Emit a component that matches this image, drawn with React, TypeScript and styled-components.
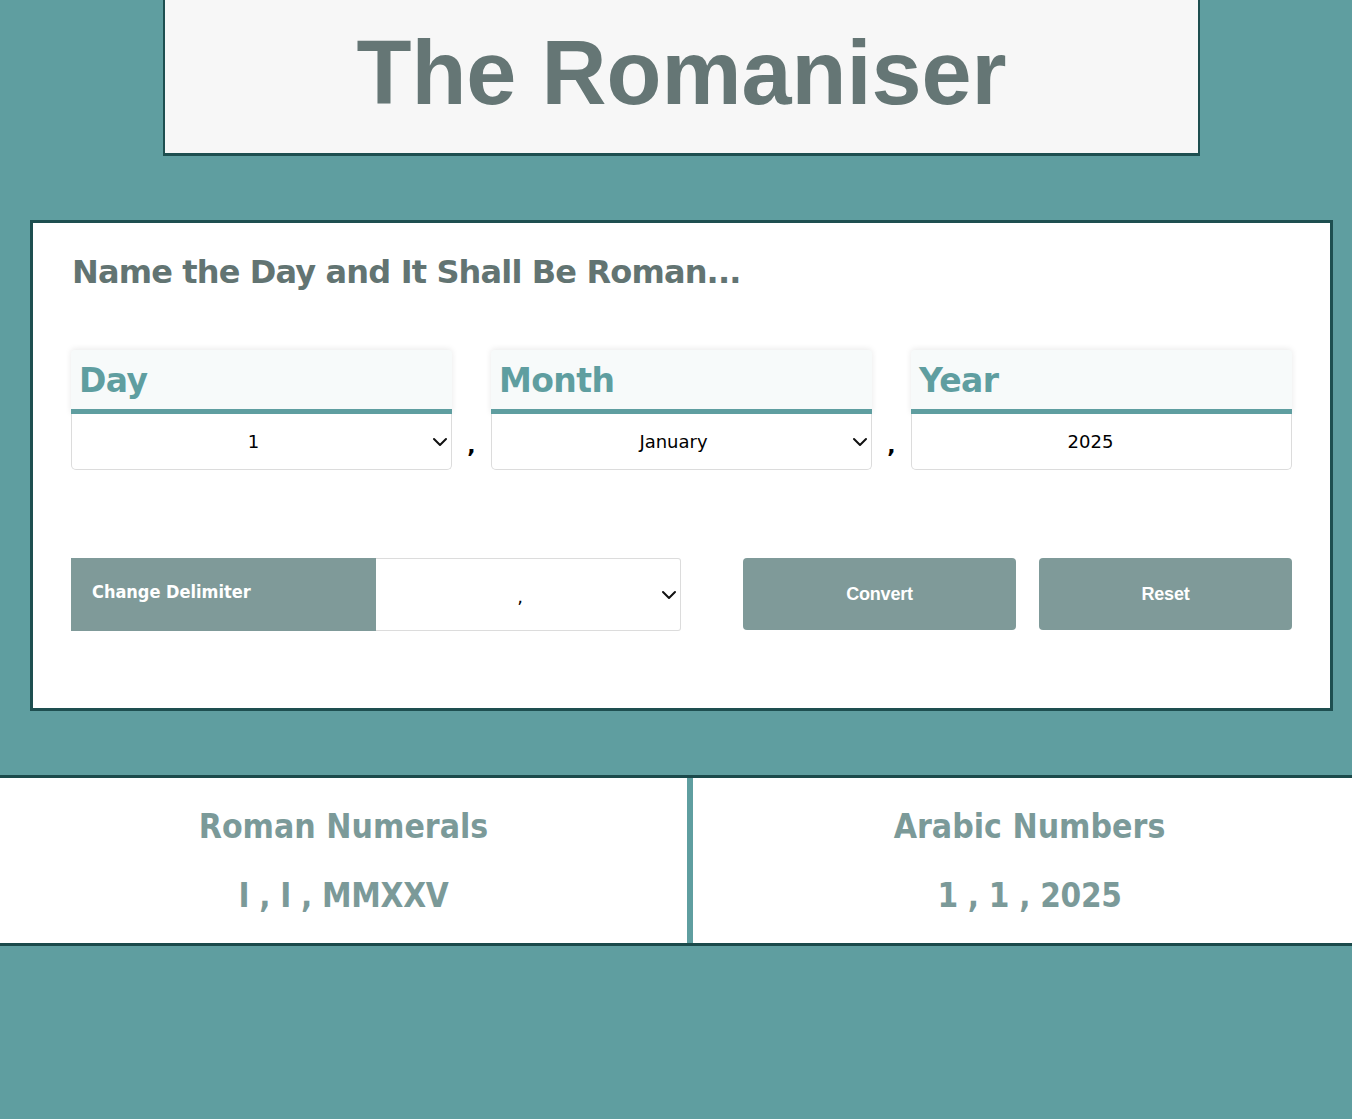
import React from "react";
import styled, { createGlobalStyle } from "styled-components";
import { ChevronDown } from "lucide-react";

const Global = createGlobalStyle`
  html, body { margin: 0; padding: 0; }
  body {
    background: #5f9ea0;
    font-family: "DejaVu Sans", sans-serif;
    min-height: 1119px;
  }
`;

const Page = styled.div`
  display: flex;
  flex-direction: column;
`;

const Header = styled.header`
  margin: 0 152px 0 163px;
  height: 153px;
  background: #f7f7f7;
  border: 2px solid #1e4f50;
  border-top: none;
  border-bottom-width: 3px;
  display: flex;
  align-items: center;
  justify-content: center;
`;

const Title = styled.h1`
  margin: 0;
  font-family: "Liberation Sans", Arial, sans-serif;
  font-weight: 700;
  font-size: 90px;
  letter-spacing: 0;
  color: #657675;
  line-height: 1;
  transform: translateY(-4px);
`;

const Card = styled.section`
  margin: 64px 19px 0 30px;
  background: #fff;
  border: 3px solid #1e4f50;
  padding: 30px 38px 77px 38px;
  display: flex;
  flex-direction: column;
`;

const Heading = styled.h2`
  margin: 0 0 59px 1px;
  font-family: "DejaVu Sans", sans-serif;
  font-weight: 700;
  font-size: 32px;
  letter-spacing: -0.85px;
  color: #627472;
  line-height: 1.2;
`;

const FieldRow = styled.div`
  display: flex;
  align-items: flex-end;
`;

const FieldCard = styled.div`
  width: 381px;
  display: flex;
  flex-direction: column;
`;

const FieldLabel = styled.div`
  height: 64px;
  box-sizing: border-box;
  background: #f7fafa;
  border-radius: 4px 4px 0 0;
  box-shadow: 0 -1px 6px rgba(0, 0, 0, 0.09);
  border-bottom: 5px solid #5f9ea0;
  padding: 2px 8px 0;
  display: flex;
  align-items: center;
  font-family: "DejaVu Sans", sans-serif;
  font-weight: 700;
  font-size: 33px;
  letter-spacing: -0.6px;
  color: #5f9ea0;
`;

const SelectWrap = styled.div<{ $h: number; $w?: number }>`
  position: relative;
  height: ${(p) => p.$h}px;
  width: ${(p) => (p.$w ? `${p.$w}px` : "100%")};
  flex: none;
  display: flex;
`;

const Chevron = styled(ChevronDown)`
  position: absolute;
  right: 0;
  top: 50%;
  margin-top: -12px;
  width: 24px;
  height: 24px;
  color: #111;
  pointer-events: none;
`;

const FieldSelect = styled.select`
  appearance: none;
  -webkit-appearance: none;
  height: 100%;
  width: 100%;
  box-sizing: border-box;
  border: 1px solid #dcdcdc;
  border-top: none;
  border-radius: 0 0 5px 5px;
  background: #fff;
  font-family: "DejaVu Sans", sans-serif;
  font-size: 18px;
  color: #000;
  text-align: center;
  text-align-last: center;
  padding: 0 24px 0 8px;
  outline: none;
`;

const FieldInput = styled.input`
  height: 56px;
  width: 100%;
  box-sizing: border-box;
  border: 1px solid #dcdcdc;
  border-top: none;
  border-radius: 0 0 5px 5px;
  background: #fff;
  font-family: "DejaVu Sans", sans-serif;
  font-size: 18px;
  color: #000;
  text-align: center;
  padding: 0 22px 0 0;
  outline: none;
`;

const Sep = styled.span`
  width: 39px;
  text-align: center;
  font-family: "DejaVu Sans", sans-serif;
  font-weight: 700;
  font-size: 22px;
  color: #000;
  padding-bottom: 12px;
`;

const ActionRow = styled.div`
  margin-top: 88px;
  display: flex;
  align-items: stretch;
  height: 73px;
`;

const DelimLabel = styled.div`
  width: 305px;
  background: #7f9a99;
  color: #fff;
  font-family: "DejaVu Sans", sans-serif;
  font-stretch: condensed;
  font-weight: 700;
  font-size: 18px;
  display: flex;
  align-items: center;
  padding: 0 21px 6px;
  box-sizing: border-box;
`;

const DelimSelect = styled.select`
  appearance: none;
  -webkit-appearance: none;
  width: 100%;
  height: 100%;
  box-sizing: border-box;
  border: 1px solid #dcdcdc;
  border-left: none;
  border-radius: 0 3px 3px 0;
  background: #fff;
  font-family: "DejaVu Sans", sans-serif;
  font-size: 18px;
  text-align: center;
  text-align-last: center;
  padding: 3px 24px 0 8px;
  outline: none;
`;

const Button = styled.button<{ $w: number; $ml: number }>`
  width: ${(p) => p.$w}px;
  margin-left: ${(p) => p.$ml}px;
  height: 72px;
  border: none;
  border-radius: 4px;
  background: #7f9a99;
  color: #fff;
  font-family: "Liberation Sans", Arial, sans-serif;
  font-weight: 700;
  font-size: 18px;
  letter-spacing: -0.2px;
  padding-top: 2px;
  cursor: pointer;
`;

const Results = styled.section`
  margin-top: 64px;
  background: #fff;
  border-top: 3px solid #1b4a4b;
  border-bottom: 3px solid #1b4a4b;
  display: grid;
  grid-template-columns: 687px 6px 1fr;
  height: 165px;
`;

const Divider = styled.div`
  background: #5f9ea0;
`;

const ResultPanel = styled.div<{ $shift?: number }>`
  display: flex;
  flex-direction: column;
  align-items: center;
  padding-top: 29px;
  padding-left: ${(p) => p.$shift ?? 0}px;
  color: #7b9a99;
  font-family: "DejaVu Sans", sans-serif;
  font-stretch: condensed;
  font-weight: 700;
`;

const ResultTitle = styled.div`
  font-size: 33.5px;
  line-height: 1.2;
`;

const ResultValue = styled.div`
  font-size: 33px;
  letter-spacing: -0.3px;
  line-height: 1.2;
  margin-top: 28px;
`;

const days = Array.from({ length: 31 }, (_, i) => i + 1);
const months = [
  "January", "February", "March", "April", "May", "June",
  "July", "August", "September", "October", "November", "December",
];

export default function App() {
  return (
    <Page>
      <Global />
      <Header>
        <Title>The Romaniser</Title>
      </Header>
      <Card>
        <Heading>Name the Day and It Shall Be Roman...</Heading>
        <FieldRow>
          <FieldCard>
            <FieldLabel>Day</FieldLabel>
            <SelectWrap $h={56}>
              <FieldSelect defaultValue="1">
                {days.map((d) => (
                  <option key={d} value={String(d)}>{d}</option>
                ))}
              </FieldSelect>
              <Chevron strokeWidth={2} />
            </SelectWrap>
          </FieldCard>
          <Sep>,</Sep>
          <FieldCard>
            <FieldLabel>Month</FieldLabel>
            <SelectWrap $h={56}>
              <FieldSelect defaultValue="January">
                {months.map((m) => (
                  <option key={m} value={m}>{m}</option>
                ))}
              </FieldSelect>
              <Chevron strokeWidth={2} />
            </SelectWrap>
          </FieldCard>
          <Sep>,</Sep>
          <FieldCard>
            <FieldLabel>Year</FieldLabel>
            <FieldInput type="text" defaultValue="2025" />
          </FieldCard>
        </FieldRow>
        <ActionRow>
          <DelimLabel>Change Delimiter</DelimLabel>
          <SelectWrap $h={73} $w={305}>
            <DelimSelect defaultValue=",">
              <option value=",">,</option>
              <option value="/">/</option>
              <option value="-">-</option>
              <option value=".">.</option>
            </DelimSelect>
            <Chevron strokeWidth={2} />
          </SelectWrap>
          <Button $w={273} $ml={62}>Convert</Button>
          <Button $w={253} $ml={23}>Reset</Button>
        </ActionRow>
      </Card>
      <Results>
        <ResultPanel>
          <ResultTitle>Roman Numerals</ResultTitle>
          <ResultValue>I , I , MMXXV</ResultValue>
        </ResultPanel>
        <Divider />
        <ResultPanel $shift={14}>
          <ResultTitle>Arabic Numbers</ResultTitle>
          <ResultValue>1 , 1 , 2025</ResultValue>
        </ResultPanel>
      </Results>
    </Page>
  );
}
